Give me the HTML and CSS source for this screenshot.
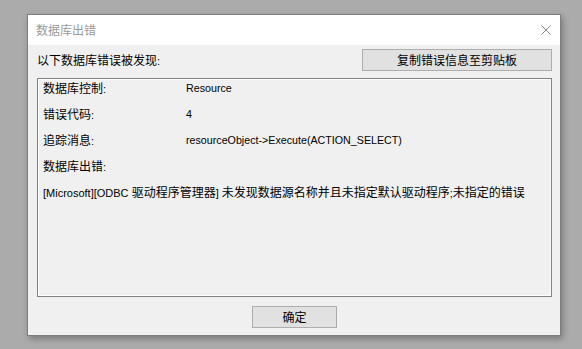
FILE: index.html
```html
<!DOCTYPE html>
<html lang="zh-CN">
<head>
<meta charset="utf-8">
<title>数据库出错</title>
<link rel="stylesheet" href="styles.css">
</head>
<body>
<div class="window">
  <div class="titlebar">
    <span class="title">数据库出错</span>
    <svg class="close" width="10" height="10" viewBox="0 0 10 10"><path d="M0.5 0.5L9.5 9.5M9.5 0.5L0.5 9.5" stroke="#8a8a8a" stroke-width="1" fill="none"/></svg>
  </div>
  <div class="content">
    <div class="header">
      <span class="cjk">以下数据库错误被发现<span class="lat">:</span></span>
      <button class="btn btn-copy">复制错误信息至剪贴板</button>
    </div>
    <div class="group">
      <div class="row"><span class="label">数据库控制<span class="lat">:</span></span><span class="value">Resource</span></div>
      <div class="row"><span class="label">错误代码<span class="lat">:</span></span><span class="value">4</span></div>
      <div class="row"><span class="label">追踪消息<span class="lat">:</span></span><span class="value">resourceObject-&gt;Execute(ACTION_SELECT)</span></div>
      <div class="row"><span class="label">数据库出错<span class="lat">:</span></span></div>
      <div class="msg"><span class="lat">[Microsoft][ODBC </span>驱动程序管理器<span class="lat">] </span>未发现数据源名称并且未指定默认驱动程序<span class="lat">;</span>未指定的错误</div>
    </div>
    <div class="footer">
      <button class="btn btn-ok">确定</button>
    </div>
  </div>
</div>
</body>
</html>
```

FILE: styles.css
```css
html, body {
  margin: 0;
  padding: 0;
}
body {
  background: #ababab;
  width: 582px;
  height: 349px;
  overflow: hidden;
  padding: 14px 0 0 27px;
  box-sizing: border-box;
  font-family: "Noto Sans CJK SC", "Noto Sans", sans-serif;
  font-size: 12px;
  color: #000;
}
.window {
  width: 534px;
  height: 322px;
  box-sizing: border-box;
  border: 1px solid #7d7d7d;
  background: #f0f0f0;
  box-shadow: 2px 3px 6px rgba(0, 0, 0, 0.28);
  display: flex;
  flex-direction: column;
}
.titlebar {
  height: 30px;
  background: #fff;
  display: flex;
  align-items: center;
  justify-content: space-between;
  padding: 0 9px 0 8px;
  flex: none;
}
.title {
  color: #9a9a9a;
  font-size: 12px;
  line-height: 16px;
}
.close {
  display: block;
}
.content {
  padding: 4px 8px 0 9px;
  display: flex;
  flex-direction: column;
}
.header {
  display: flex;
  align-items: center;
  justify-content: space-between;
  height: 22px;
}
.cjk {
  line-height: 16px;
}
.lat {
  font-family: "Liberation Sans", "Noto Sans CJK SC", sans-serif;
  font-size: 11px;
}
.btn {
  font-family: "Noto Sans CJK SC", sans-serif;
  font-size: 12px;
  color: #000;
  background: #e1e1e1;
  border: 1px solid #adadad;
  height: 22px;
  padding: 0;
  margin: 0;
  box-sizing: border-box;
  line-height: 18px;
}
.btn-copy {
  width: 190px;
}
.group {
  margin-top: 7px;
  height: 219px;
  box-sizing: border-box;
  border: 1px solid #828282;
  box-shadow: inset 0 0 0 1px #fff;
  padding: 1px 4px 0 5px;
}
.row {
  display: flex;
  line-height: 16px;
  height: 16px;
  margin-top: 10px;
  white-space: nowrap;
}
.row:first-child {
  margin-top: 0;
}
.msg {
  line-height: 16px;
  height: 16px;
  margin-top: 10px;
  white-space: pre;
}
.label {
  width: 143px;
  flex: none;
}
.value {
  font-family: "Liberation Sans", sans-serif;
  font-size: 10.7px;
}
.footer {
  display: flex;
  justify-content: center;
  padding: 9px 0 0 0;
}
.btn-ok {
  width: 85px;
}
```
